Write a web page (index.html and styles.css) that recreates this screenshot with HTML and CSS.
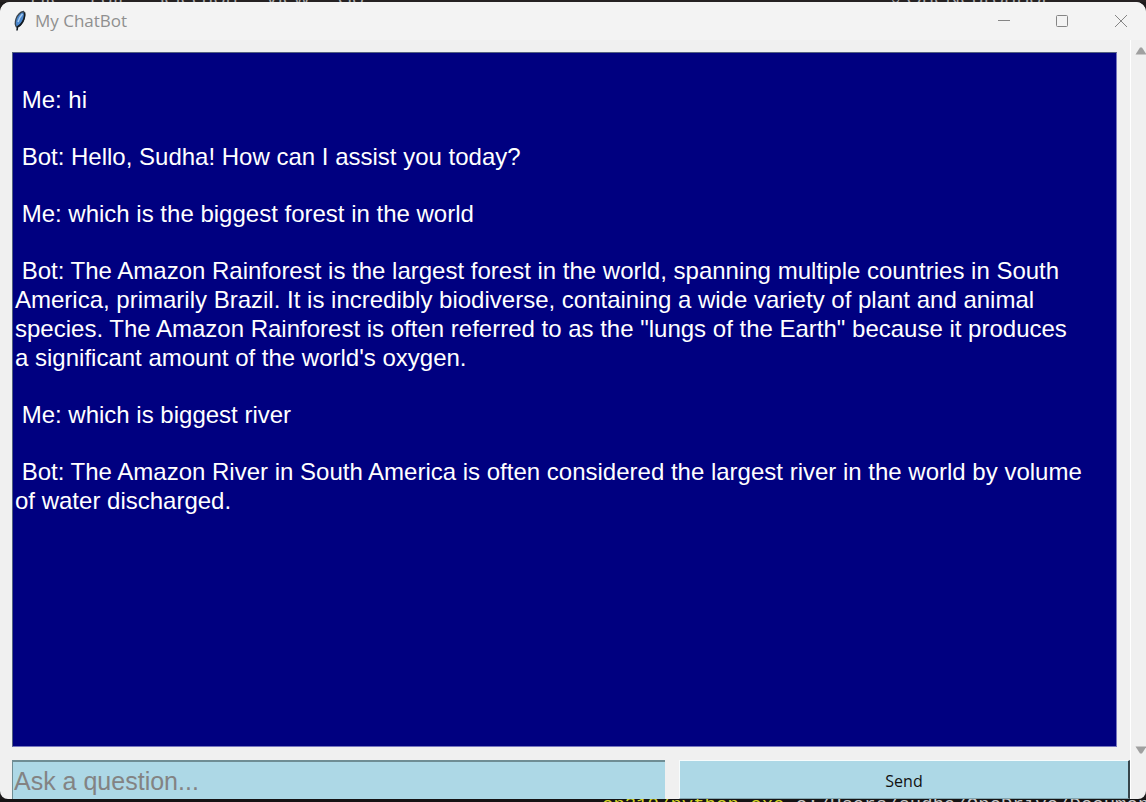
FILE: index.html
```html
<!DOCTYPE html>
<html lang="en">
<head>
<meta charset="utf-8">
<title>My ChatBot</title>
<link rel="stylesheet" href="styles.css">
</head>
<body>
<div class="desktop">
  <div class="backdrop-top" aria-hidden="true">
    <div class="backdrop-menu"><span>File</span><span>Edit</span><span>Selection</span><span>View</span><span>Go</span></div>
    <div class="backdrop-search">⌕ OneNeuronBot</div>
  </div>
  <main class="window">
    <header class="titlebar">
      <svg class="feather" viewBox="0 0 14 22" aria-hidden="true">
        <path d="M10.500 1.500C7.500 2 4.500 5 3 9c-1 3-1 6 .5 8C7 16 10 12 11 8.500c.8-3 .8-5.500-.5-7z" fill="#4a86cc" stroke="#3a4650" stroke-width="1.300"/>
        <path d="M11.500 2.500c.6 3-.2 6.500-2 9.500-1.300 2.200-3 4-5 5l-.5 3.500" fill="none" stroke="#111a22" stroke-width="1.600"/>
        <path d="M9.500 4C7.500 6 6 8.500 5 12" fill="none" stroke="#a9cdf0" stroke-width="1.500"/>
      </svg>
      <h1 class="title">My ChatBot</h1>
      <div class="controls">
        <button class="control" aria-label="Minimize"><svg viewBox="0 0 14 14"><path d="M1 6.500h12"/></svg></button>
        <button class="control" aria-label="Maximize"><svg viewBox="0 0 14 14"><rect x="1.500" y="1.500" width="11" height="11" rx="1"/></svg></button>
        <button class="control" aria-label="Close"><svg viewBox="0 0 14 14"><path d="M1 1l12 12M13 1L1 13"/></svg></button>
      </div>
    </header>
    <div class="content">
      <div class="chat">
        <section class="log" aria-label="Conversation">
          <p>&nbsp;Me: hi</p>
          <p>&nbsp;Bot: Hello, Sudha! How can I assist you today?</p>
          <p>&nbsp;Me: which is the biggest forest in the world</p>
          <p>&nbsp;Bot: The Amazon Rainforest is the largest forest in the world, spanning multiple countries in South America, primarily Brazil. It is incredibly biodiverse, containing a wide variety of plant and animal species. The Amazon Rainforest is often referred to as the "lungs of the Earth" because it produces<br>a significant amount of the world's oxygen.</p>
          <p>&nbsp;Me: which is biggest river</p>
          <p>&nbsp;Bot: The Amazon River in South America is often considered the largest river in the world by volume<br>of water discharged.</p>
        </section>
        <form class="composer">
          <input class="question" type="text" aria-label="Question" placeholder="Ask a question...">
          <button class="send" type="button">Send</button>
        </form>
      </div>
      <div class="scrollbar">
        <button class="arrow" aria-label="Scroll up"><svg viewBox="0 0 12 8"><path d="M5 .5h2L11.500 7.500H.5z"/></svg></button>
        <button class="arrow arrow-down" aria-label="Scroll down"><svg viewBox="0 0 12 8"><path d="M5 7.500h2L11.500 .5H.5z"/></svg></button>
      </div>
    </div>
  </main>
  <div class="backdrop-bottom" aria-hidden="true"><span>on310/python.exe</span> c:/Users/sudha/OneDrive/Documents</div>
</div>
</body>
</html>
```
FILE: styles.css
```css
* { box-sizing: border-box; }

body { margin: 0; }

button { border: 0; padding: 0; background: none; }

svg { display: block; }

.desktop {
  display: grid;
  grid-template-rows: 2px minmax(0, 1fr) 3px;
  height: 100vh;
  overflow: hidden;
  background: #1c1a1b;
}

.backdrop-top {
  display: flex;
  align-items: flex-end;
  padding-left: 30px;
  overflow: hidden;
  background: #252122;
  color: #aaa;
  font: 20px/8px "Open Sans", sans-serif;
}

.backdrop-menu { display: flex; flex: 1; gap: 28px; }

.backdrop-search { flex: 0 0 256px; }

.window {
  display: grid;
  grid-template-rows: 38px minmax(0, 1fr);
  overflow: hidden;
  border-radius: 10px 10px 8px 8px;
  background: #f0f0f0;
}

.titlebar {
  display: flex;
  align-items: center;
  padding-left: 13px;
  background: #f3f3f3;
}

.feather { width: 14px; height: 22px; }

.title {
  flex: 1;
  margin: 0 0 0 8px;
  color: #8f8f8f;
  font: 400 17px/24px "Open Sans", sans-serif;
}

.controls { display: flex; }

.control {
  display: grid;
  place-items: center;
  width: 58px;
  height: 38px;
}

.control:last-child { width: 50px; margin-left: 5px; }

.control svg {
  width: 14px;
  height: 14px;
  fill: none;
  stroke: #858585;
}

.content {
  display: grid;
  grid-template-columns: minmax(0, 1fr) 16px;
}

.chat {
  display: grid;
  grid-template-rows: minmax(0, 1fr) 39px;
  gap: 13px;
  padding: 12px 0 0 12px;
}

.log {
  margin-right: 13px;
  padding: 32px 0 0 2px;
  overflow: hidden;
  border: 1px solid #7777be;
  border-top-color: #536080;
  border-left-color: #536080;
  background: #000080;
  color: #fff;
  font: 24px/29px "Liberation Sans", Arial, sans-serif;
}

.log p { margin: 0 0 28px; }

.composer {
  display: grid;
  grid-template-columns: minmax(0, 653fr) minmax(0, 451fr);
  gap: 14px;
}

.question {
  min-width: 0;
  padding: 1px 0 0 1px;
  border: 0 solid #6f8d94;
  border-width: 2px 0 0 1px;
  border-radius: 0;
  background: #add8e6;
  color: #222;
  font: 25px/29px "Liberation Sans", Arial, sans-serif;
}

.question::placeholder { color: #838383; opacity: 1; }

.send {
  padding-top: 2px;
  border: 0 solid #f7fcfd;
  border-width: 1px 2px 1px 1px;
  border-right-color: #36454b;
  border-bottom-color: #82a4ae;
  background: #add8e6;
  color: #111;
  font: 16px/22px "Open Sans", sans-serif;
}

.scrollbar {
  display: flex;
  flex-direction: column;
  justify-content: space-between;
  padding: 7px 0 45px 4px;
  overflow: hidden;
  border-left: 1px solid #fff;
}

.arrow svg { width: 12px; height: 8px; fill: #a0a0a0; }

.backdrop-bottom {
  padding-left: 602px;
  overflow: hidden;
  white-space: nowrap;
  background: #151314;
  color: #c9c9c9;
  font: 19px/12px "Liberation Mono", monospace;
}

.backdrop-bottom span { color: #d6d62a; }
```
